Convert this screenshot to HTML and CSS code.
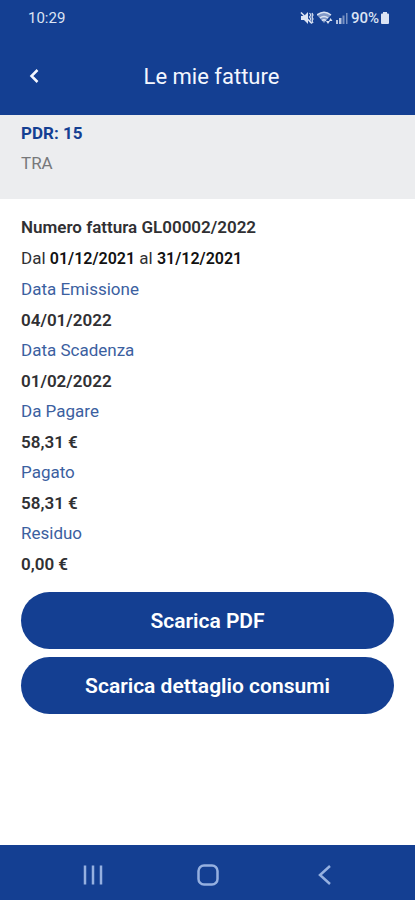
FILE: index.html
```html
<!DOCTYPE html>
<html lang="it">
<head>
<meta charset="utf-8">
<meta name="viewport" content="width=device-width, initial-scale=1">
<title>Le mie fatture</title>
<link rel="stylesheet" href="styles.css">
</head>
<body>
<div class="status">
  <span>10:29</span>
  <div class="status-icons">
    <svg width="14" height="14" viewBox="0 0 14 14" fill="currentColor" aria-hidden="true"><path d="M1 5h3l4-4v12L4 9H1z"/><path d="M1 1.500l11 11" fill="none" stroke="currentColor" stroke-width="1.500"/><path d="M9.500 2l1.500 2-1.500 2L11 8l-1.500 2 1.500 2M12 2l1 2-1 2 1 2-1 2 1 2" fill="none" stroke="currentColor" stroke-width="1.200"/></svg>
    <svg width="16" height="14" viewBox="0 0 16 14" fill="currentColor" aria-hidden="true"><path d="M0 4Q7 -1.500 14 4L7 12z" opacity=".55"/><path d="M0 4Q7-1.500 14 4M3 7q4-3 8 0M5 9.500q2-1.500 4 0" fill="none" stroke="currentColor" stroke-width="1.500"/><path d="M9 10h4l-2 3zM12 10l1.500-3L15.500 10z"/></svg>
    <svg width="12" height="12" viewBox="0 0 12 12" fill="currentColor" aria-hidden="true"><path d="M0 8h2v4H0zM3 6h2.500v6H3z" opacity=".8"/><path d="M6.500 3.500h2V12h-2zM10 1h1.500v11H10z" opacity=".5"/></svg>
    <span class="battery-text">90%</span>
    <svg width="8" height="12" viewBox="0 0 8 12" fill="currentColor" aria-hidden="true"><path d="M2 0h4v1.500h1q1 0 1 1V11q0 1-1 1H1q-1 0-1-1V2.500q0-1 1-1h1z"/></svg>
  </div>
</div>
<header class="header">
  <button class="back" type="button" aria-label="Indietro"><svg width="10" height="16" viewBox="0 0 10 16" fill="none" stroke="currentColor" stroke-width="2.500"><path d="M8.500 2L2.500 8l6 6"/></svg></button>
  <h1>Le mie fatture</h1>
</header>
<section class="supply">
  <p class="pdr">PDR: 15</p>
  <p>TRA</p>
</section>
<main class="invoice">
  <p class="number">Numero fattura GL00002/2022</p>
  <p>Dal <b>01/12/2021</b> al <b>31/12/2021</b></p>
  <dl>
    <dt>Data Emissione</dt><dd>04/01/2022</dd>
    <dt>Data Scadenza</dt><dd>01/02/2022</dd>
    <dt>Da Pagare</dt><dd>58,31 €</dd>
    <dt>Pagato</dt><dd>58,31 €</dd>
    <dt>Residuo</dt><dd>0,00 €</dd>
  </dl>
  <div class="actions">
    <button type="button">Scarica PDF</button>
    <button type="button">Scarica dettaglio consumi</button>
  </div>
</main>
<nav class="navbar" aria-label="Sistema">
  <button type="button" aria-label="Recenti"><svg width="22" height="22" viewBox="0 0 22 22" fill="none" stroke="currentColor" stroke-width="2.500"><path d="M3 1.500v19M11 1.500v19M19 1.500v19"/></svg></button>
  <button type="button" aria-label="Home"><svg width="22" height="22" viewBox="0 0 22 22" fill="none" stroke="currentColor" stroke-width="2.500"><rect x="1.500" y="1.500" width="19" height="19" rx="5.500"/></svg></button>
  <button type="button" aria-label="Indietro"><svg width="22" height="22" viewBox="0 0 22 22" fill="none" stroke="currentColor" stroke-width="2.500"><path d="M17 2L7 11l10 9"/></svg></button>
</nav>
</body>
</html>
```
FILE: styles.css
```css
* { box-sizing: border-box; }
body {
  margin: 0;
  min-height: 100vh;
  display: flex;
  flex-direction: column;
  font-family: Roboto, sans-serif;
  font-size: 17px;
  color: #303033;
  background: #fff;
}
p, h1, dl, dd { margin: 0; }
button { border: 0; padding: 0; font: inherit; color: inherit; background: none; }
svg { display: block; }
.status {
  display: flex;
  justify-content: space-between;
  align-items: center;
  height: 36px;
  padding: 0 26px 0 28px;
  color: #dce4f4;
  background: #143f92;
  font-size: 15px;
}
.status-icons { display: flex; align-items: center; gap: 3px; }
.battery-text { font-weight: 500; margin-right: -1px; }
.header {
  display: grid;
  grid-template-columns: 68px 1fr 60px;
  align-items: center;
  height: 79px;
  padding-top: 1px;
  color: #f4f7ff;
  background: #143f92;
}
.back { display: grid; place-items: center; height: 48px; }
.header h1 { font-size: 22px; font-weight: 400; text-align: center; }
.supply {
  height: 84px;
  padding: 3px 21px;
  background: #ecedef;
  color: #77787a;
  line-height: 30px;
}
.pdr { font-weight: 700; color: #143f92; }
.invoice { flex: 1; padding: 13px 21px; line-height: 30px; }
.number, .invoice b, dd { font-weight: 600; }
.invoice b { font-size: 16px; color: #111; }
.number, dt { line-height: 31px; }
dt { color: #3b609f; }
.actions { display: grid; gap: 8px; padding-top: 13px; }
.actions button {
  height: 57px;
  border-radius: 29px;
  color: #fff;
  background: #143f92;
  font-size: 21px;
  font-weight: 600;
}
.navbar {
  display: grid;
  grid-template-columns: repeat(3, 1fr);
  height: 55px;
  padding: 4px 33px 0 35px;
  color: #95b0e0;
  background: #143f92;
}
.navbar button { display: grid; place-items: center; }
```
